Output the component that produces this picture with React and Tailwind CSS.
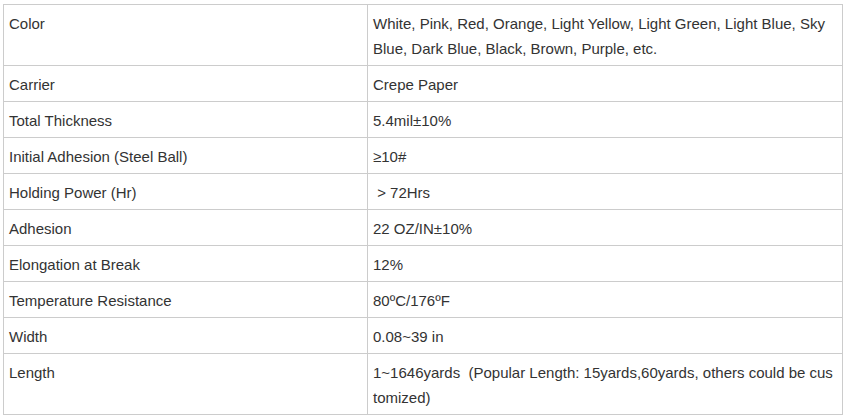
import React from 'react';

const rows = [
  { k: 'Color', v: ['White, Pink, Red, Orange, Light Yellow, Light Green, Light Blue, Sky', 'Blue, Dark Blue, Black, Brown, Purple, etc.'] },
  { k: 'Carrier', v: ['Crepe Paper'] },
  { k: 'Total Thickness', v: ['5.4mil±10%'] },
  { k: 'Initial Adhesion (Steel Ball)', v: ['≥10#'] },
  { k: 'Holding Power (Hr)', v: ['\u00a0> 72Hrs'] },
  { k: 'Adhesion', v: ['22 OZ/IN±10%'] },
  { k: 'Elongation at Break', v: ['12%'] },
  { k: 'Temperature Resistance', v: ['80ºC/176ºF'] },
  { k: 'Width', v: ['0.08~39 in'] },
  { k: 'Length', v: ['1~1646yards\u00a0 (Popular Length: 15yards,60yards, others could be cus', 'tomized)'] },
];

export default function App() {
  return (
    <div className="bg-white w-[846px] h-[418px] pt-[4px] pl-[3px] font-['Liberation_Sans',Arial,sans-serif] text-[15px] leading-[25px] text-[#333]">
      <table className="border-collapse w-[840px] table-fixed">
        <colgroup>
          <col className="w-[364px]" />
          <col />
        </colgroup>
        <tbody>
          {rows.map((r, i) => (
            <tr key={i}>
              <td className="border border-[#cccccc] pl-[5px] pr-[5px] pt-[6px] pb-[4px] align-top">{r.k}</td>
              <td className="border border-[#cccccc] pl-[5px] pr-[5px] pt-[6px] pb-[4px] align-top whitespace-nowrap">
                {r.v.map((line, j) => (
                  <React.Fragment key={j}>
                    {j > 0 && <br />}
                    {line}
                  </React.Fragment>
                ))}
              </td>
            </tr>
          ))}
        </tbody>
      </table>
    </div>
  );
}
